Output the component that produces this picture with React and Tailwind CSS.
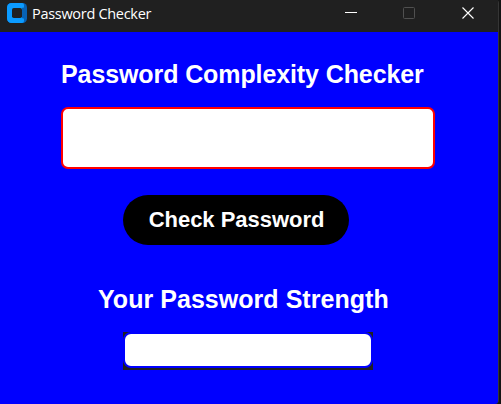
function TitleBar() {
  return (
    <header className="flex h-8 items-start bg-[#202020] font-['Open_Sans','Noto_Sans',sans-serif] text-white">
      <svg className="mt-[3px] ml-[7px] shrink-0" width="20" height="20" viewBox="0 0 20 20">
        <rect width="20" height="20" rx="4.500" fill="#0762b5" />
        <path d="M4.500 0H15a2 2 0 0 1 2 2v1.500A1.500 1.500 0 0 1 15.500 5v10a1.500 1.500 0 0 1 1.500 1.500V18a2 2 0 0 1-2 2H4.500A4.500 4.500 0 0 1 0 15.500v-11A4.500 4.500 0 0 1 4.500 0z" fill="#0b9bff" />
        <path d="M15 4.500v11l1.500-1v-9z" fill="#0762b5" />
        <rect x="5" y="5" width="10" height="10" rx="1.800" fill="#202020" />
      </svg>
      <span className="ml-[5px] pt-1 text-[14.5px] leading-5 tracking-[-0.3px] whitespace-nowrap">Password Checker</span>
      <div className="mt-[7px] mr-6 ml-auto flex">
        <svg width="12" height="12" viewBox="0 0 12 12">
          <path d="M0 5.500h12" stroke="#fff" />
        </svg>
        <svg className="ml-[46px]" width="12" height="12" viewBox="0 0 12 12">
          <rect x="0.500" y="0.500" width="11" height="11" rx="1" fill="none" stroke="#505050" />
        </svg>
        <svg className="ml-[47px]" width="12" height="12" viewBox="0 0 12 12">
          <path d="M.5.5l11 11M11.500.5l-11 11" stroke="#fff" strokeWidth="1.1" />
        </svg>
      </div>
    </header>
  );
}

function StrengthMeter() {
  return (
    <div className="mt-[18px] ml-[123px] h-[38px] w-[250px] bg-[#202020]">
      <div className="h-9 rounded-[8px] border-2 border-[#0000ff] bg-white" />
    </div>
  );
}

export default function App() {
  return (
    <div className="h-[404px] w-[501px] overflow-hidden bg-[#141414]">
      <div className="flex h-full w-[499px] flex-col rounded-tr-[3px] rounded-br-[4px] border-r border-[#353535] bg-[#202020]">
        <TitleBar />
        <main className="flex flex-1 flex-col items-start rounded-br-[3px] bg-[#0000ff] font-['Liberation_Sans',Arial,sans-serif] font-bold text-white">
          <h1 className="mt-[27px] ml-[61px] text-[25px] leading-[30px] tracking-[-0.1px] whitespace-nowrap">Password Complexity Checker</h1>
          <input
            type="password"
            aria-label="Password"
            className="mt-[18px] ml-[61px] h-[62px] w-[374px] rounded-[7px] border-2 border-[#ff0000] bg-white px-3 text-black outline-none"
          />
          <button className="mt-[26px] ml-[123px] h-[50px] w-[226px] rounded-full bg-black pb-0.5 pl-px text-[22px] tracking-[-0.03px] whitespace-nowrap">
            Check Password
          </button>
          <h2 className="mt-[39px] ml-[98px] text-[25px] leading-[30px] tracking-[0.04px] whitespace-nowrap">Your Password Strength</h2>
          <StrengthMeter />
        </main>
      </div>
    </div>
  );
}
